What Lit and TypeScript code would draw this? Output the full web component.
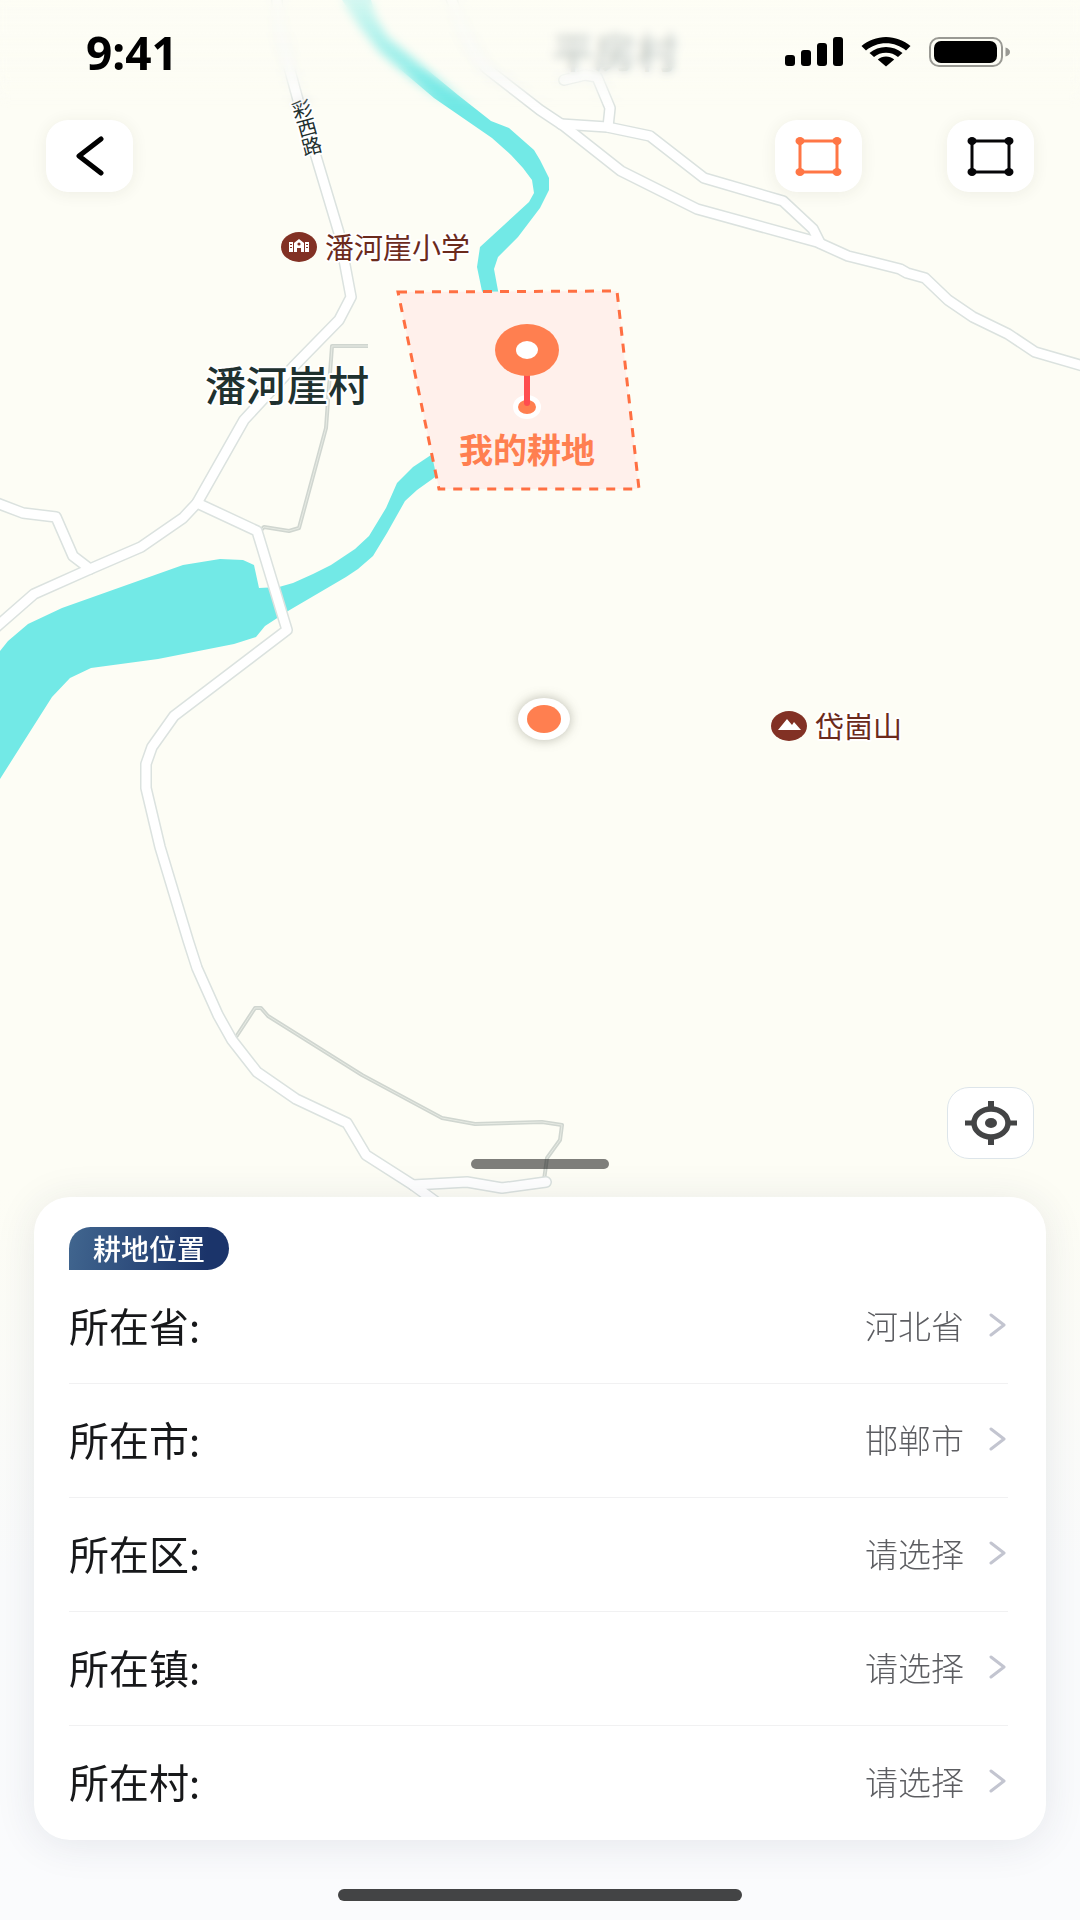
import { LitElement, html, css, svg } from "lit";
import { customElement, property, state } from "lit/decorators.js";

/** Main roads: drawn as a grey casing with a white line on top. */
const ROADS = [
  "M276 -10 L279 25 L289 67 L298 100 L315 153 L339 233 L351 297 L339 320 L293 367 L244 420 L197 503 L183 518 L141 547 L90 569 L34 594 L-6 629",
  "M-6 502 L23 513 L56 517 L73 556 L90 569",
  "M197 503 L257 531 L287 630 L174 716 L152 747 L146 764 L146 788 L160 847 L188 940 L197 968 L218 1015 L232 1040 L257 1072 L296 1099 L347 1123 L366 1155 L413 1185 L450 1212",
  "M413 1185 L467 1182 L502 1188 L546 1182",
  "M448 -10 L463 30 L477 57 L486 68 L540 110 L564 126 L621 171 L697 209 L817 242 L848 256 L900 269 L907 273 L925 278 L948 300 L973 317 L1008 334 L1035 352 L1090 368",
  "M561 124 L607 127 L650 136 L704 178 L783 201 L813 229 L820 243",
  "M608 127 L610 108 L597 77 L585 75 L564 80",
];

const TRACKS = [
  "M368 346 L332 346 L326 428 L299 528 L289 531 L264 527 L260 531",
  "M236 1037 L255 1008 L261 1008 L268 1016 L362 1075 L442 1118 L475 1124 L542 1122 L562 1125 L560 1140 L547 1158 L544 1180",
];

const WATER = [
  "M339 -10 L342 0 L360 27 L380 52 L434 98 L492 138 L511 155 L523 168 L532 180 L534 193 L529 202 L480 247 L477 267 L483 296 L499 296 L494 269 L498 257 L518 237 L540 208 L549 190 L549 178 L540 160 L534 150 L509 128 L491 121 L458 95 L424 67 L388 37 L376 17 L371 0 L368 -10 Z",
  "M440 449 L413 467 L397 483 L386 508 L369 536 L355 549 L331 565 L313 574 L293 583 L279 587 L259 588 L254 565 L243 560 L220 559 L183 565 L62 608 L28 624 L8 641 L0 651 L0 779 L52 697 L70 678 L91 668 L158 659 L234 644 L256 637 L265 626 L288 611 L346 577 L358 569 L373 556 L387 533 L405 501 L417 490 L445 470 Z",
];

@customElement("field-map")
export class FieldMap extends LitElement {
  static styles = css`
    :host {
      display: block;
    }
    .map {
      display: block;
      width: 100%;
      height: auto;
    }
    .water {
      fill: #72e9e6;
    }
    .casing,
    .road,
    .track,
    .track-core {
      fill: none;
      stroke-linejoin: round;
      stroke-linecap: round;
    }
    .casing {
      stroke: #dbe2df;
      stroke-width: 12;
    }
    .road {
      stroke: #ffffff;
      stroke-width: 9;
    }
    .track {
      stroke: #d0d6d0;
      stroke-width: 4;
      stroke-linecap: butt;
    }
    .track-core {
      stroke: #e6eae3;
      stroke-width: 1;
      stroke-linecap: butt;
    }
    .parcel {
      fill: #fff0eb;
      stroke: #ff6f42;
      stroke-width: 3;
      stroke-dasharray: 9 8;
    }
    .orange {
      fill: #ff7f50;
    }
    .white {
      fill: #ffffff;
    }
    .stem {
      stroke: #ff4d4f;
      stroke-width: 6;
      stroke-linecap: round;
    }
    .poi {
      fill: #823124;
    }
    .poi-text,
    .village,
    .far-village,
    .road-text {
      paint-order: stroke;
      stroke: #ffffff;
      stroke-width: 4;
      stroke-linejoin: round;
    }
    text {
      font-family: "Noto Sans CJK SC", sans-serif;
    }
    .poi-text {
      font-size: 29px;
      fill: #6b2a1c;
    }
    .village {
      font-size: 41px;
      font-weight: 500;
      fill: #20312f;
    }
    .far-village {
      font-size: 42px;
      font-weight: 500;
      fill: #a3aeaa;
    }
    .road-text {
      font-size: 20px;
      fill: #23302f;
      text-anchor: middle;
    }
    .parcel-text {
      font-size: 34px;
      font-weight: 700;
      fill: #ff7f50;
      text-anchor: middle;
    }
    .halo {
      fill: #ffffff;
      filter: drop-shadow(0 0 6px rgba(60, 60, 40, 0.35));
    }
  `;

  render() {
    return html`
      <svg class="map" viewBox="0 0 1080 1220" role="img" aria-label="地图">
        ${WATER.map((d) => svg`<path class="water" d=${d}></path>`)}
        ${TRACKS.map((d) => svg`<path class="track" d=${d}></path>`)}
        ${TRACKS.map((d) => svg`<path class="track-core" d=${d}></path>`)}
        ${ROADS.map((d) => svg`<path class="casing" d=${d}></path>`)}
        ${ROADS.map((d) => svg`<path class="road" d=${d}></path>`)}

        <text class="far-village" x="552" y="68">平房村</text>
        <g transform="rotate(-15 307 128)">
          <text class="road-text" x="307" y="116">彩</text>
          <text class="road-text" x="307" y="135">西</text>
          <text class="road-text" x="307" y="154">路</text>
        </g>

        <ellipse class="poi" cx="299" cy="247" rx="18" ry="15"></ellipse>
        <path
          class="white"
          d="M289 242h4v10h-4zM305 242h4v10h-4zM294 252v-9l5 -4 5 4v9h-3v-4h-4v4z"
        ></path>
        <circle class="poi" cx="299" cy="244" r="1.6"></circle>
        <path class="poi" d="M290 244h2v1h-2zM290 247h2v1h-2zM306 244h2v1h-2zM306 247h2v1h-2z"></path>
        <text class="poi-text" x="325" y="259">潘河崖小学</text>
        <text class="village" x="205" y="401">潘河崖村</text>

        <path class="parcel" d="M398 292 L617 291 L639 489 L439 489 Z"></path>
        <ellipse class="white" cx="527" cy="407" rx="14" ry="12"></ellipse>
        <ellipse class="orange" cx="527" cy="407" rx="9" ry="7"></ellipse>
        <path class="stem" d="M527 372V403"></path>
        <ellipse class="orange" cx="527" cy="350" rx="32" ry="26"></ellipse>
        <ellipse class="white" cx="527" cy="350" rx="11" ry="9"></ellipse>
        <text class="parcel-text" x="527" y="463">我的耕地</text>

        <ellipse class="halo" cx="544" cy="719" rx="26" ry="21"></ellipse>
        <ellipse class="orange" cx="544" cy="719" rx="17" ry="14"></ellipse>

        <ellipse class="poi" cx="789" cy="726" rx="18" ry="15"></ellipse>
        <path class="white" d="M778 730l9 -11 5 6 2 -3 7 8z"></path>
        <text class="poi-text" x="815" y="738">岱崮山</text>
      </svg>
    `;
  }
}

@customElement("status-bar")
export class StatusBar extends LitElement {
  static styles = css`
    :host {
      display: flex;
      align-items: center;
      justify-content: space-between;
      padding: 0 69px 0 86px;
      height: 104px;
      box-sizing: border-box;
    }
    .time {
      font: 700 46px/60px "Noto Sans", sans-serif;
      color: #000;
    }
    .glyphs {
      display: flex;
      align-items: center;
      gap: 18px;
    }
    svg {
      display: block;
    }
  `;

  render() {
    return html`
      <time class="time">9:41</time>
      <div class="glyphs">
        <svg width="58" height="30" viewBox="0 0 58 30" aria-hidden="true">
          <rect x="0" y="18" width="10" height="11" rx="3"></rect>
          <rect x="16" y="13" width="10" height="16" rx="3"></rect>
          <rect x="32" y="6" width="10" height="23" rx="3"></rect>
          <rect x="48" y="0" width="10" height="29" rx="3"></rect>
        </svg>
        <svg width="50" height="30" viewBox="0 0 50 30" aria-hidden="true">
          <path d="M25 0C34 0 43 3.500 49.500 9L45 13.500C39.500 9 32.500 6.300 25 6.300S10.500 9 5 13.500L0.500 9C7 3.500 16 0 25 0z"></path>
          <path d="M25 10C31 10 37 12.200 41.500 16L37 20C33.800 17.300 29.500 15.800 25 15.800S16.200 17.300 13 20L8.500 16C13 12.200 19 10 25 10z"></path>
          <path d="M25 19.500C28 19.500 31 20.600 33.200 22.500L25 29.500L16.800 22.500C19 20.600 22 19.500 25 19.500z"></path>
        </svg>
        <svg width="82" height="30" viewBox="0 0 82 30" aria-hidden="true">
          <rect x="1" y="1" width="72" height="28" rx="9" fill="none" stroke="#9a9a94" stroke-width="2"></rect>
          <rect x="5" y="4" width="63" height="22" rx="7"></rect>
          <path d="M76.500 10.500C79.500 11.500 81 13 81 15S79.500 18.500 76.500 19.500z" fill="#9a9a94"></path>
        </svg>
      </div>
    `;
  }
}

interface Place {
  name: string;
  value: string;
}

@customElement("location-card")
export class LocationCard extends LitElement {
  static styles = css`
    :host {
      display: block;
      padding: 30px 38px 1px 35px;
      border-radius: 36px;
      background: #ffffff;
      box-shadow: 0 4px 40px rgba(40, 50, 80, 0.1);
    }
    .tag {
      display: inline-block;
      vertical-align: top;
      margin: 0;
      padding: 0 24px;
      border-radius: 26px 26px 26px 0;
      background: linear-gradient(100deg, #41668f, #1b346a 85%);
      color: #ffffff;
      font: 500 28px/43px "Noto Sans CJK SC", sans-serif;
    }
    .list {
      margin: 0;
      padding: 0;
      list-style: none;
    }
    .item + .item {
      border-top: 1px solid #f1f1f2;
    }
    .row {
      display: flex;
      align-items: center;
      width: 100%;
      height: 113px;
      padding: 0 2px 4px 0;
      border: 0;
      background: none;
      text-align: left;
      cursor: pointer;
      font: 400 33px/48px "Noto Sans CJK SC", sans-serif;
    }
    .name {
      flex: 1;
      font-size: 40px;
      color: #17181a;
    }
    .value {
      font-weight: 300;
      color: #5c5d61;
    }
    .arrow {
      margin-left: 25px;
    }
  `;

  @property({ attribute: false }) places: Place[] = [];

  render() {
    return html`
      <h2 class="tag">耕地位置</h2>
      <ul class="list">
        ${this.places.map(
          (p) => html`
            <li class="item">
              <button class="row" type="button">
                <span class="name">${p.name}:</span>
                <span class="value">${p.value}</span>
                <svg class="arrow" width="17" height="24" viewBox="0 0 17 24" aria-hidden="true">
                  <path d="M2 2L15 12L2 22" fill="none" stroke="#c3c5d0" stroke-width="3" stroke-linecap="round" stroke-linejoin="round"></path>
                </svg>
              </button>
            </li>
          `
        )}
      </ul>
    `;
  }
}

@customElement("app-root")
export class AppRoot extends LitElement {
  static styles = css`
    :host {
      display: grid;
      min-height: 100vh;
      overflow: hidden;
      background: linear-gradient(#fdfdf5 0%, #fdfdf5 62%, #fafbfc 82%, #fafbfd 100%);
    }
    .map,
    .haze,
    .screen {
      grid-area: 1 / 1;
      min-width: 0;
    }
    .map {
      align-self: start;
    }
    .haze {
      align-self: start;
      height: 110px;
      background: linear-gradient(rgba(253, 253, 245, 0.7), rgba(253, 253, 245, 0));
      backdrop-filter: blur(5px);
      mask-image: linear-gradient(#000 60%, transparent);
    }
    .screen {
      z-index: 1;
      display: flex;
      flex-direction: column;
    }
    .tools {
      display: flex;
      gap: 85px;
      padding: 16px 46px 0;
    }
    .back {
      margin-right: auto;
    }
    .key {
      display: grid;
      place-items: center;
      width: 87px;
      height: 72px;
      padding: 0;
      border: 0;
      border-radius: 22px;
      background: #ffffff;
      box-shadow: 0 2px 16px rgba(60, 60, 40, 0.08);
      cursor: pointer;
    }
    .locate {
      align-self: flex-end;
      margin: auto 46px 0;
      border: 1px solid #dde5ea;
      box-shadow: none;
    }
    .handle {
      align-self: center;
      width: 138px;
      height: 10px;
      border-radius: 5px;
      background: rgba(0, 0, 0, 0.5);
    }
    .card {
      margin: 28px 34px 0;
    }
    .home {
      align-self: center;
      width: 404px;
      height: 12px;
      margin: 49px 0 19px;
      border-radius: 6px;
      background: #434445;
    }
  `;

  @state() private places: Place[] = [
    { name: "所在省", value: "河北省" },
    { name: "所在市", value: "邯郸市" },
    { name: "所在区", value: "请选择" },
    { name: "所在镇", value: "请选择" },
    { name: "所在村", value: "请选择" },
  ];

  private frameIcon(color: string) {
    return html`
      <svg width="47" height="40" viewBox="0 0 47 40" aria-hidden="true" fill=${color}>
        <rect x="5" y="5" width="37" height="31" fill="none" stroke=${color} stroke-width="3"></rect>
        <ellipse cx="5" cy="5" rx="4.500" ry="4"></ellipse>
        <ellipse cx="42" cy="5" rx="4.500" ry="4"></ellipse>
        <ellipse cx="5" cy="36" rx="4.500" ry="4"></ellipse>
        <ellipse cx="42" cy="36" rx="4.500" ry="4"></ellipse>
      </svg>
    `;
  }

  render() {
    return html`
      <field-map class="map"></field-map>
      <div class="haze"></div>
      <main class="screen">
        <status-bar></status-bar>
        <nav class="tools">
          <button class="key back" type="button" aria-label="返回">
            <svg width="28" height="40" viewBox="0 0 28 40" aria-hidden="true">
              <path d="M25 3L3 20L25 37" fill="none" stroke="#000" stroke-width="5" stroke-linecap="round" stroke-linejoin="round"></path>
            </svg>
          </button>
          <button class="key" type="button" aria-label="编辑地块" aria-pressed="true">${this.frameIcon("#ff7645")}</button>
          <button class="key" type="button" aria-label="绘制地块">${this.frameIcon("#060608")}</button>
        </nav>
        <button class="key locate" type="button" aria-label="定位">
          <svg width="52" height="44" viewBox="0 0 52 44" aria-hidden="true" fill="#434445">
            <ellipse cx="26" cy="22" rx="17" ry="14" fill="none" stroke="#434445" stroke-width="5.500"></ellipse>
            <ellipse cx="26" cy="22" rx="6" ry="5"></ellipse>
            <path d="M23 0h6v7h-6zM23 37h6v7h-6zM0 19.500h8v5h-8zM44 19.500h8v5h-8z"></path>
          </svg>
        </button>
        <div class="handle"></div>
        <location-card class="card" .places=${this.places}></location-card>
        <div class="home"></div>
      </main>
    `;
  }
}
